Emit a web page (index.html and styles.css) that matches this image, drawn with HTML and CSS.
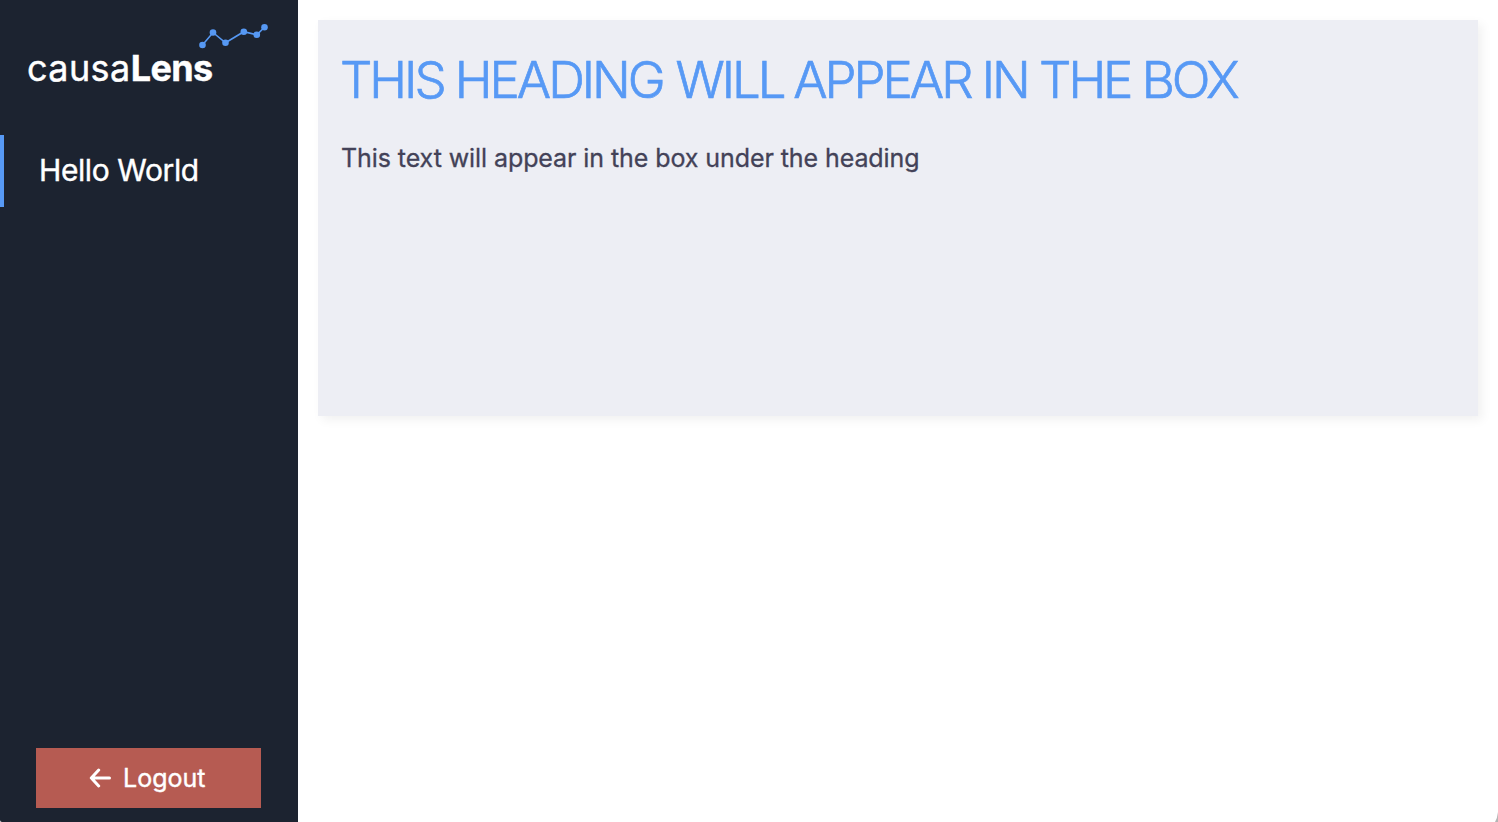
FILE: index.html
```html
<!DOCTYPE html>
<html lang="en">
<head>
<meta charset="utf-8">
<title>causaLens</title>
<link rel="stylesheet" href="styles.css">
</head>
<body>
<div class="app">
  <aside class="sidebar">
    <div class="brand">
      <span class="brand-name">causa<b>Lens</b></span>
      <svg class="brand-graph" width="72" height="28" viewBox="198 22 72 28" aria-hidden="true">
        <polyline points="202.5,45 213,32.5 225.5,42.8 243.8,31.7 256.8,34.8 264.5,27.3"/>
        <circle cx="202.5" cy="45" r="3.3"/><circle cx="213" cy="32.5" r="3.3"/><circle cx="225.5" cy="42.8" r="3.3"/>
        <circle cx="243.8" cy="31.7" r="3.3"/><circle cx="256.8" cy="34.8" r="3.3"/><circle cx="264.5" cy="27.3" r="3.3"/>
      </svg>
    </div>
    <nav class="nav"><a class="nav-item"><span>Hello World</span></a></nav>
    <button class="logout" type="button">
      <svg class="arrow" width="22" height="20" viewBox="0 0 22 20" aria-hidden="true"><path d="M9.7 2 L2.3 10 L9.7 18 M2.5 10 H20.5"/></svg>
      <span>Logout</span>
    </button>
  </aside>
  <main class="content">
    <section class="card">
      <h1>THIS HEADING <span class="tight">WILL</span> APPEAR IN THE BOX</h1>
      <p>This text will appear in the box under the heading</p>
    </section>
  </main>
  <svg class="corner" width="3" height="10" viewBox="0 0 3 10" aria-hidden="true"><path d="M3 0 V10 H0 Q2.4 6 3 0Z"/></svg>
</div>
</body>
</html>
```
FILE: styles.css
```css
* { box-sizing: border-box; }
body { margin: 0; background: #fff; font-family: Inter, "Liberation Sans", sans-serif; }
.app { position: relative; display: flex; height: 100vh; overflow: hidden; }
.sidebar { width: 298px; flex: none; display: flex; flex-direction: column; background: #1c2330; color: #fff; border-bottom-left-radius: 2px; }
.brand { position: relative; height: 135px; padding: 44px 0 0 27px; }
.brand-name { display: block; font-size: 36px; line-height: 48px; white-space: nowrap; letter-spacing: 0.4px; -webkit-text-stroke: 0.4px #fff; }
.brand-name b { font-weight: 700; letter-spacing: -0.6px; }
.brand-graph { position: absolute; left: 198px; top: 22px; fill: #5698f3; stroke: none; }
.brand-graph polyline { fill: none; stroke: #5698f3; stroke-width: 1.6; }
.nav { flex: 1; }
.nav-item { display: flex; align-items: center; height: 72px; padding: 0 0 2px 35px; border-left: 4px solid #5799f5; font-size: 30px; white-space: nowrap; letter-spacing: -0.4px; -webkit-text-stroke: 0.4px #fff; }
.logout { display: flex; align-items: center; width: 225px; height: 60px; margin: 0 0 14px 36px; padding: 0 0 0 53px; gap: 12px; border: 0; background: #b65b52; color: #fff; font: 25px Inter, "Liberation Sans", sans-serif; -webkit-text-stroke: 0.4px #fff; }
.arrow { fill: none; stroke: #fff; stroke-width: 3; stroke-linecap: round; stroke-linejoin: round; }
.content { flex: 1; padding: 20px; }
.card { height: 396px; padding: 24px 22px; background: #edeef4; box-shadow: 4px 4px 10px rgba(0, 0, 0, 0.06); white-space: nowrap; }
h1 { margin: 0; font-size: 51px; line-height: 72px; font-weight: 300; letter-spacing: -3.05px; color: #5799f5; -webkit-text-stroke: 0.7px #5799f5; }
.tight { margin: 0 -1.5px 0 1.5px; }
p { margin: 24px 0 0 1px; font-size: 25px; line-height: 36px; letter-spacing: -0.08px; color: #434258; -webkit-text-stroke: 0.3px #434258; }
.corner { position: absolute; right: 0; bottom: 0; fill: #b5b5b5; }
```
